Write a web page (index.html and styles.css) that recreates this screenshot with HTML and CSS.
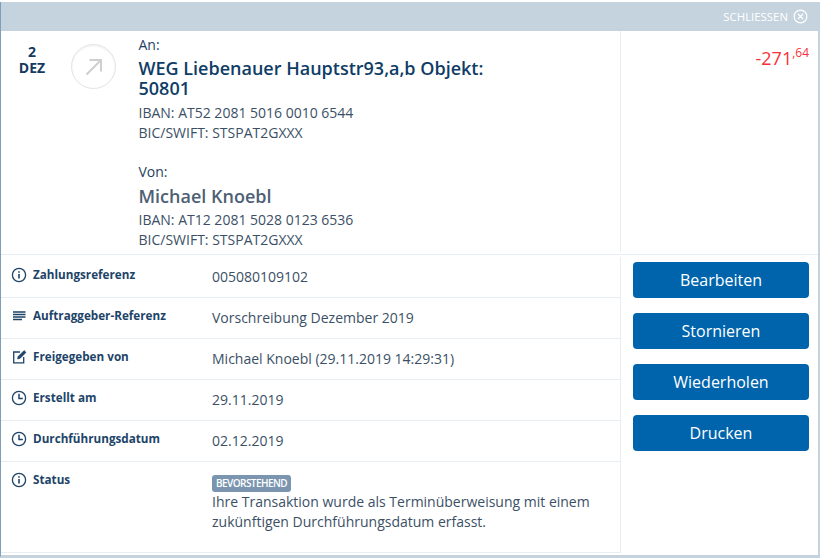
FILE: index.html
```html
<!DOCTYPE html>
<html lang="de">
<head>
<meta charset="utf-8">
<title>Transaktion</title>
<link rel="stylesheet" href="styles.css">
</head>
<body>
<div class="modal">
  <header class="bar">
    <span class="close-label">SCHLIESSEN</span>
    <svg class="close-icon" width="15" height="15" viewBox="0 0 15 15" fill="none" stroke="#fff" stroke-width="1.2"><circle cx="7.5" cy="7.5" r="6.4"/><path d="M5 5l5 5M10 5l-5 5"/></svg>
  </header>
  <section class="top">
    <div class="parties">
      <div class="date"><div>2</div><div>DEZ</div></div>
      <div class="direction">
        <svg width="18" height="18" viewBox="0 0 18 18" fill="none" stroke="#cfcfcf" stroke-width="2"><path d="M1.5 16.500L16 2M4.500 2H16V13.500"/></svg>
      </div>
      <div class="info">
        <div class="label">An:</div>
        <div class="name">WEG Liebenauer Hauptstr93,a,b Objekt: 50801</div>
        <div class="line">IBAN: AT52 2081 5016 0010 6544</div>
        <div class="line">BIC/SWIFT: STSPAT2GXXX</div>
        <div class="label from">Von:</div>
        <div class="name muted">Michael Knoebl</div>
        <div class="line">IBAN: AT12 2081 5028 0123 6536</div>
        <div class="line">BIC/SWIFT: STSPAT2GXXX</div>
      </div>
    </div>
    <div class="amount">-271<sup>,64</sup></div>
  </section>
  <section class="bottom">
    <div class="rows">
      <div class="row">
        <div class="key">
          <svg class="ico" width="16" height="16" viewBox="0 0 16 16" fill="none" stroke="#1d4468" stroke-width="1.3"><circle cx="8" cy="8" r="6.6"/><path d="M8 7v4.600M8 4.200v1.500" stroke-width="1.6"/></svg>
          <span>Zahlungsreferenz</span>
        </div>
        <div class="val">005080109102</div>
      </div>
      <div class="row">
        <div class="key">
          <svg class="ico" width="16" height="16" viewBox="0 0 16 16" fill="none" stroke="#1d4468" stroke-width="1.3"><path d="M2 4h12.500M2 6.500h12.500M2 9h12.500M2 11.500h9" /></svg>
          <span>Auftraggeber-Referenz</span>
        </div>
        <div class="val">Vorschreibung Dezember 2019</div>
      </div>
      <div class="row">
        <div class="key">
          <svg class="ico" width="16" height="16" viewBox="0 0 16 16" fill="none" stroke="#1d4468" stroke-width="1.3"><path d="M9 3H2.700v10.800h10V8"/><path d="M6.500 10l.6-2.500 6-6 1.900 1.900-6 6z" fill="#1d4468" stroke-width=".6"/></svg>
          <span>Freigegeben von</span>
        </div>
        <div class="val">Michael Knoebl (29.11.2019 14:29:31)</div>
      </div>
      <div class="row">
        <div class="key">
          <svg class="ico" width="16" height="16" viewBox="0 0 16 16" fill="none" stroke="#1d4468" stroke-width="1.3"><circle cx="8" cy="8" r="6.6"/><path d="M8 3.800V8.600h3.800" stroke-width="1.5"/></svg>
          <span>Erstellt am</span>
        </div>
        <div class="val">29.11.2019</div>
      </div>
      <div class="row">
        <div class="key">
          <svg class="ico" width="16" height="16" viewBox="0 0 16 16" fill="none" stroke="#1d4468" stroke-width="1.3"><circle cx="8" cy="8" r="6.6"/><path d="M8 3.800V8.600h3.800" stroke-width="1.5"/></svg>
          <span>Durchführungsdatum</span>
        </div>
        <div class="val">02.12.2019</div>
      </div>
      <div class="row status">
        <div class="key">
          <svg class="ico" width="16" height="16" viewBox="0 0 16 16" fill="none" stroke="#1d4468" stroke-width="1.3"><circle cx="8" cy="8" r="6.6"/><path d="M8 7v4.600M8 4.200v1.500" stroke-width="1.6"/></svg>
          <span>Status</span>
        </div>
        <div class="val">
          <span class="badge">BEVORSTEHEND</span>
          <p class="note">Ihre Transaktion wurde als Terminüberweisung mit einem zukünftigen Durchführungsdatum erfasst.</p>
        </div>
      </div>
    </div>
    <div class="actions">
      <button class="btn" type="button">Bearbeiten</button>
      <button class="btn" type="button">Stornieren</button>
      <button class="btn" type="button">Wiederholen</button>
      <button class="btn" type="button">Drucken</button>
    </div>
  </section>
</div>
</body>
</html>
```

FILE: styles.css
```css
* { box-sizing: border-box; }
html, body { margin: 0; padding: 0; }
body {
  width: 820px;
  height: 558px;
  overflow: hidden;
  background: #fff;
  padding-top: 2px;
  font-family: "Open Sans", sans-serif;
  color: #1d4468;
}
.modal {
  height: 556px;
  border-left: 1px solid #7f9fb8;
  border-right: 2px solid #c5d3de;
  border-bottom: 3px solid #c5d3de;
  display: flex;
  flex-direction: column;
}
.bar {
  height: 29px;
  flex: none;
  background: #c5d3de;
  display: flex;
  align-items: center;
  justify-content: flex-end;
  padding-right: 10px;
  color: #fff;
}
.close-label { font-size: 11.4px; margin-right: 5px; }
.close-icon { display: block; }
.top {
  height: 224px;
  flex: none;
  display: flex;
  border-bottom: 1px solid #e8edf1;
}
.parties {
  width: 620px;
  flex: none;
  border-right: 1px solid #e8edf1;
  margin-bottom: 2px;
  display: flex;
  align-items: flex-start;
}
.date {
  width: 62px;
  padding-top: 13px;
  text-align: center;
  font-size: 14px;
  font-weight: 700;
  line-height: 16px;
  color: #143a5e;
}
.direction {
  width: 45px;
  height: 45px;
  margin: 13px 0 0 8px;
  border-radius: 50%;
  border: 1px solid #e4e4e4;
  box-shadow: inset 0 1px 2px rgba(0,0,0,.07);
  display: flex;
  align-items: center;
  justify-content: center;
}
.info { width: 370px; margin-left: 22.5px; padding-top: 4px; }
.label { font-size: 14px; line-height: 20px; color: #1f4263; }
.from { margin-top: 19px; }
.name {
  font-size: 18px;
  font-weight: 600;
  line-height: 20px;
  color: #0f3d66;
  margin: 3px 0 5px;
}
.muted { color: #4d6074; margin: 4px 0; }
.line { font-size: 14px; line-height: 20px; color: #3b5066; }
.amount {
  flex: 1;
  text-align: right;
  padding: 15px 9px 0 0;
  font-size: 18px;
  line-height: 24px;
  color: #fb2f3a;
}
.amount sup { font-size: 12px; line-height: 0; vertical-align: 8px; }
.bottom { flex: 1; display: flex; min-height: 0; }
.rows {
  width: 620px;
  flex: none;
  margin-top: 2px;
  border-right: 1px solid #e8edf1;
  border-bottom: 1px solid #e8edf1;
  height: 296px;
  display: flex;
  flex-direction: column;
}
.row {
  height: 41px;
  flex: none;
  display: flex;
  align-items: flex-start;
  border-bottom: 1px solid #e8edf1;
}
.row.status { flex: 1; border-bottom: 0; }
.key {
  width: 211px;
  flex: none;
  display: flex;
  align-items: flex-start;
  padding: 9px 0 0 10px;
  font-size: 11.7px;
  font-weight: 700;
  line-height: 16px;
  color: #1d4468;
}
.ico { flex: none; margin: 1px 6px 0 0; }
.val { padding-top: 10px; font-size: 14px; line-height: 20px; color: #3b5066; }
.status .val { padding-top: 13px; }
.badge {
  display: block;
  width: 79px;
  height: 17px;
  padding: 0 4px;
  border-radius: 3px;
  background: #7b95b0;
  color: #fff;
  font-size: 10px;
  letter-spacing: -0.55px;
  font-weight: 600;
  line-height: 17px;
  white-space: nowrap;
}
.note { margin: 0; width: 400px; }
.actions {
  flex: 1;
  display: flex;
  flex-direction: column;
  gap: 15px;
  padding: 7px 0 0 12px;
}
.btn {
  width: 176px;
  height: 36px;
  border: 0;
  border-radius: 4px;
  background: #0064ac;
  color: #fff;
  font-family: inherit;
  font-size: 16px;
  padding: 0;
}
```
